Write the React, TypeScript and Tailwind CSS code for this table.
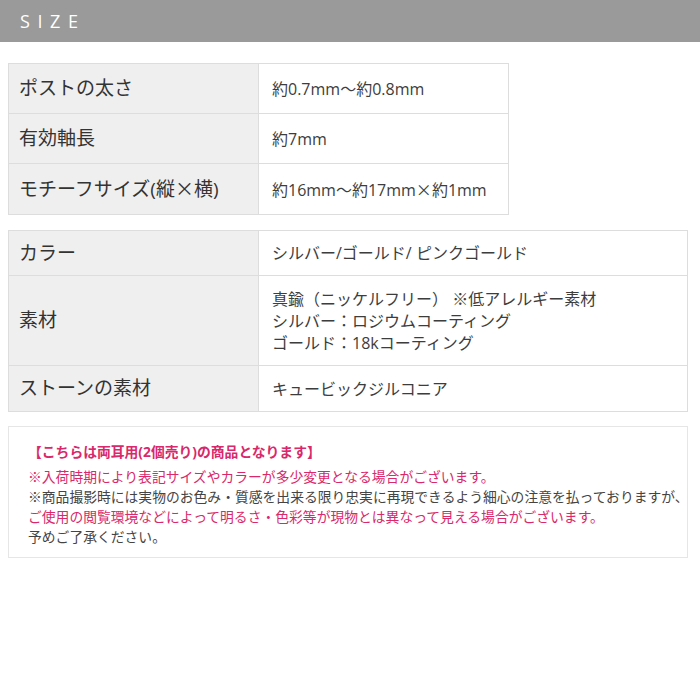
import React from "react";

const font = { fontFamily: "'Open Sans', 'Noto Sans CJK JP', sans-serif" };

function X() {
  return <span className="[font-family:'Noto_Sans_CJK_JP',sans-serif]">×</span>;
}

function Row({
  label,
  children,
  h,
  last,
}: {
  label: React.ReactNode;
  children: React.ReactNode;
  h: string;
  last?: boolean;
}) {
  return (
    <div className={`flex ${last ? "" : "border-b border-[#dddddd]"} ${h}`}>
      <div className="w-[250px] shrink-0 bg-[#efefef] border-r border-[#dddddd] flex items-center pl-[10px] text-[19px] text-[#333333]">
        {label}
      </div>
      <div className="flex-1 flex flex-col justify-center pl-[13px] text-[16px] text-[#3d3d3d] leading-[22px]">
        {children}
      </div>
    </div>
  );
}

export default function App() {
  return (
    <div className="w-[700px] h-[700px] bg-white" style={font}>
      <div className="h-[42px] bg-[#9a9a9a] flex items-center pl-[20px]">
        <span className="text-white text-[18px] tracking-[0.42em] leading-none">SIZE</span>
      </div>

      <div className="mt-[21px] ml-[8px] w-[501px] border border-[#dddddd]">
        <Row label="ポストの太さ" h="h-[50px]">
          <div>約0.7mm～約0.8mm</div>
        </Row>
        <Row label="有効軸長" h="h-[50px]">
          <div>約7mm</div>
        </Row>
        <Row
          label={
            <span>
              モチーフサイズ(縦<X />横)
            </span>
          }
          h="h-[50px]"
          last
        >
          <div>
            約16mm～約17mm<X />約1mm
          </div>
        </Row>
      </div>

      <div className="mt-[15px] ml-[8px] w-[680px] border border-[#dddddd]">
        <Row label="カラー" h="h-[45px]">
          <div>シルバー/ゴールド/ ピンクゴールド</div>
        </Row>
        <Row label="素材" h="h-[90px]">
          <div>真鍮（ニッケルフリー） ※低アレルギー素材</div>
          <div>シルバー：ロジウムコーティング</div>
          <div>ゴールド：18kコーティング</div>
        </Row>
        <Row label="ストーンの素材" h="h-[45px]" last>
          <div>キュービックジルコニア</div>
        </Row>
      </div>

      <div className="mt-[14px] ml-[8px] w-[680px] border border-[#e6e6e6] pt-[15px] pb-[10px] pl-[19px] text-[13.8px] leading-[20px] text-[#444444] whitespace-nowrap">
        <div className="font-bold text-[#d9286b] mb-[5px]">【こちらは両耳用(2個売り)の商品となります】</div>
        <div className="text-[#d9286b]">※入荷時期により表記サイズやカラーが多少変更となる場合がございます。</div>
        <div>※商品撮影時には実物のお色み・質感を出来る限り忠実に再現できるよう細心の注意を払っておりますが、</div>
        <div className="text-[#d9286b]">ご使用の閲覧環境などによって明るさ・色彩等が現物とは異なって見える場合がございます。</div>
        <div>予めご了承ください。</div>
      </div>
    </div>
  );
}
